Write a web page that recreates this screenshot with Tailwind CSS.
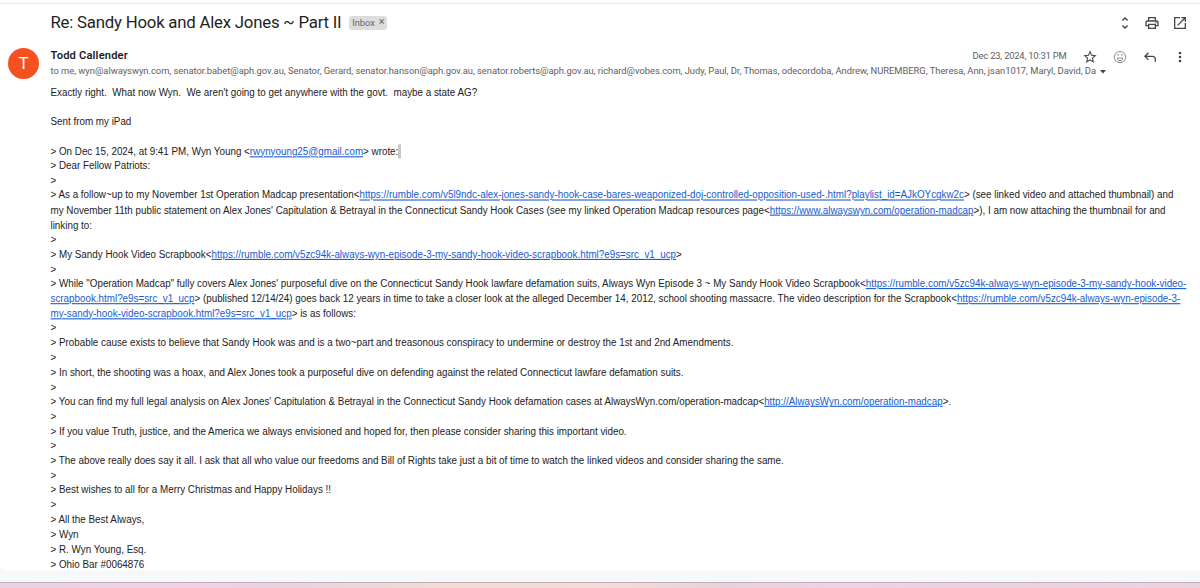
<!DOCTYPE html>
<html lang="en">
<head>
  <meta charset="UTF-8" />
  <title>Re: Sandy Hook and Alex Jones ~ Part II</title>
  <script src="https://cdn.jsdelivr.net/npm/@tailwindcss/browser@4"></script>
</head>
<body class="h-[588px] overflow-hidden bg-[#f6f8fc] font-['Roboto',sans-serif] text-[#1f1f1f]">
  <div class="flex h-full flex-col">
    <div class="h-1 shrink-0 border-b border-[#e9e9eb] bg-[#fdfdfe]"></div>
    <main class="h-[567px] shrink-0 rounded-bl-lg bg-white">
      <header class="flex h-[37px] items-center pr-[12.5px] pl-[50.5px]">
        <h1 class="text-[16.8px] tracking-[-0.22px] whitespace-nowrap">Re: Sandy Hook and Alex Jones ~ Part II</h1>
        <span class="ml-2 flex h-[14px] w-[38px] items-center justify-center gap-1 rounded-[3px] bg-[#ddd] text-[9.2px] text-[#666]">Inbox <span class="text-[11px]">×</span></span>
        <div class="ml-auto flex items-center gap-[11.5px] text-[#444746]">
          <svg class="size-4" viewBox="0 0 24 24" fill="currentColor"><path d="M12 5.83 15.17 9l1.41-1.41L12 3 7.41 7.59 8.83 9 12 5.83zm0 12.34L8.83 15l-1.41 1.41L12 21l4.59-4.59L15.17 15 12 18.17z"/></svg>
          <svg class="size-4" viewBox="0 0 24 24" fill="currentColor"><path d="M19 8h-1V3H6v5H5c-1.66 0-3 1.34-3 3v6h4v4h12v-4h4v-6c0-1.66-1.34-3-3-3zM8 5h8v3H8V5zm8 14H8v-4h8v4zm2-4v-2H6v2H4v-4c0-.55.45-1 1-1h14c.55 0 1 .45 1 1v4h-2z"/><circle cx="18" cy="11.5" r="1"/></svg>
          <svg class="size-4" viewBox="0 0 24 24" fill="currentColor"><path d="M19 19H5V5h7V3H3v18h18v-9h-2v7zM14 3v2h3.59l-9.83 9.83 1.41 1.41L19 6.41V10h2V3h-7z"/></svg>
        </div>
      </header>

      <section class="flex h-[43.6px] pl-2">
        <div class="mt-[7px] mr-[11.5px] flex size-[31px] shrink-0 items-center justify-center rounded-full bg-[#f4511e] text-[17px] text-white">T</div>
        <div class="flex-1 pt-2">
          <div class="flex h-[15px] items-center pr-[12.5px]">
            <span class="text-[11.2px] font-semibold tracking-[0.14px]">Todd Callender</span>
            <span class="ml-auto text-[9.4px] tracking-[-0.19px] text-[#5e5e5e]">Dec 23, 2024, 10:31 PM</span>
            <div class="ml-[15px] flex items-center gap-[14px] text-[#444746]">
              <svg class="size-4" viewBox="0 0 24 24" fill="currentColor"><path d="m22 9.24-7.19-.62L12 2 9.19 8.63 2 9.24l5.46 4.73L5.82 21 12 17.27 18.18 21l-1.63-7.03L22 9.24zM12 15.4l-3.76 2.27 1-4.28-3.32-2.88 4.38-.38L12 6.1l1.71 4.04 4.38.38-3.32 2.88 1 4.28L12 15.4z"/></svg>
              <svg class="size-4 text-[#8a8a8a]" viewBox="0 0 24 24" fill="none" stroke="currentColor" stroke-width="1.4"><circle cx="12" cy="12" r="8.5"/><path d="M8 13.5h8a4 4 0 0 1-8 0z"/><path d="M9 8v2M15 8v2" stroke-width="1.8"/></svg>
              <svg class="size-4" viewBox="0 0 24 24" fill="currentColor"><path d="M19 19v-4c0-.83-.29-1.54-.88-2.13C17.54 12.29 16.83 12 16 12H6.83l3.6 3.6L9 17l-6-6 6-6 1.43 1.4L6.83 10H16c1.38 0 2.56.49 3.54 1.46C20.51 12.44 21 13.62 21 15v4h-2z"/></svg>
              <svg class="size-4" viewBox="0 0 24 24" fill="currentColor"><path d="M12 8a2 2 0 1 0 0-4 2 2 0 0 0 0 4zm0 2a2 2 0 1 0 0 4 2 2 0 0 0 0-4zm0 6a2 2 0 1 0 0 4 2 2 0 0 0 0-4z"/></svg>
            </div>
          </div>
          <div class="flex h-[15px] items-center text-[#5e5e5e]">
            <span class="text-[9.4px] tracking-[-0.024px] whitespace-nowrap">to me, wyn@alwayswyn.com, senator.babet@aph.gov.au, Senator, Gerard, senator.hanson@aph.gov.au, senator.roberts@aph.gov.au, richard@vobes.com, Judy, Paul, Dr, Thomas, odecordoba, Andrew, NUREMBERG, Theresa, Ann, jsan1017, Maryl, David, Da</span>
            <svg class="ml-1 h-[4px] w-[6px]" viewBox="0 0 6 4" fill="#444746"><path d="M0 0h6L3 3.5z"/></svg>
          </div>
        </div>
      </section>

      <article class="origin-top scale-y-108 pl-[50.5px] font-['Liberation_Sans',sans-serif] text-[9.83px] leading-[13.65px] whitespace-pre text-[#222] [&_a]:text-[#155bd0] [&_a]:underline [&>div]:h-[13.65px]"><div>Exactly right.  What now Wyn.  We aren't going to get anywhere with the govt.  maybe a state AG?</div><div></div><div>Sent from my iPad</div><div></div><div class="flex">&gt; On Dec 15, 2024, at 9:41 PM, Wyn Young &lt;<a>rwynyoung25@gmail.com</a>&gt; wrote:<span class="h-full w-[3px] bg-[#c6c6c6]"></span></div><div>&gt; Dear Fellow Patriots:</div><div>&gt;</div><div>&gt; As a follow~up to my November 1st Operation Madcap presentation&lt;<a>https://rumble.com/v5l9ndc-alex-jones-sandy-hook-case-bares-weaponized-doj-controlled-opposition-used-.html?playlist_id=AJkOYcgkw2c</a>&gt; (see linked video and attached thumbnail) and</div><div>my November 11th public statement on Alex Jones' Capitulation &amp; Betrayal in the Connecticut Sandy Hook Cases (see my linked Operation Madcap resources page&lt;<a>https://www.alwayswyn.com/operation-madcap</a>&gt;), I am now attaching the thumbnail for and</div><div>linking to:</div><div>&gt;</div><div>&gt; My Sandy Hook Video Scrapbook&lt;<a>https://rumble.com/v5zc94k-always-wyn-episode-3-my-sandy-hook-video-scrapbook.html?e9s=src_v1_ucp</a>&gt;</div><div>&gt;</div><div>&gt; While "Operation Madcap" fully covers Alex Jones' purposeful dive on the Connecticut Sandy Hook lawfare defamation suits, Always Wyn Episode 3 ~ My Sandy Hook Video Scrapbook&lt;<a>https://rumble.com/v5zc94k-always-wyn-episode-3-my-sandy-hook-video-</a></div><div><a>scrapbook.html?e9s=src_v1_ucp</a>&gt; (published 12/14/24) goes back 12 years in time to take a closer look at the alleged December 14, 2012, school shooting massacre. The video description for the Scrapbook&lt;<a>https://rumble.com/v5zc94k-always-wyn-episode-3-</a></div><div><a>my-sandy-hook-video-scrapbook.html?e9s=src_v1_ucp</a>&gt; is as follows:</div><div>&gt;</div><div>&gt; Probable cause exists to believe that Sandy Hook was and is a two~part and treasonous conspiracy to undermine or destroy the 1st and 2nd Amendments.</div><div>&gt;</div><div>&gt; In short, the shooting was a hoax, and Alex Jones took a purposeful dive on defending against the related Connecticut lawfare defamation suits.</div><div>&gt;</div><div>&gt; You can find my full legal analysis on Alex Jones' Capitulation &amp; Betrayal in the Connecticut Sandy Hook defamation cases at AlwaysWyn.com/operation-madcap&lt;<a>http://AlwaysWyn.com/operation-madcap</a>&gt;.</div><div>&gt;</div><div>&gt; If you value Truth, justice, and the America we always envisioned and hoped for, then please consider sharing this important video.</div><div>&gt;</div><div>&gt; The above really does say it all. I ask that all who value our freedoms and Bill of Rights take just a bit of time to watch the linked videos and consider sharing the same.</div><div>&gt;</div><div>&gt; Best wishes to all for a Merry Christmas and Happy Holidays !!</div><div>&gt;</div><div>&gt; All the Best Always,</div><div>&gt; Wyn</div><div>&gt; R. Wyn Young, Esq.</div><div>&gt; Ohio Bar #0064876</div></article>
    </main>
    <footer class="mt-auto h-[6px] shrink-0 border-t border-[#bfb0b9] bg-[linear-gradient(90deg,#e9d2e6_0%,#f2d0e6_16%,#e8d3e0_24%,#f2dcd2_37%,#f5dcd6_50%,#e8d3da_60%,#f0d0e6_70%,#ead2e0_84%,#f0d0e2_95%,#e8d3dc_100%)]"></footer>
  </div>
</body>
</html>
